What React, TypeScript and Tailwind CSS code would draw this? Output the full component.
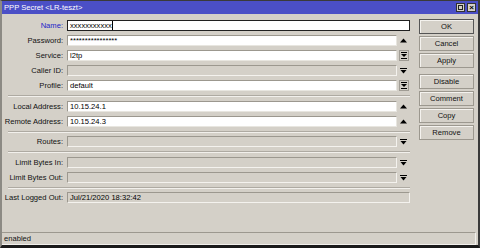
import React from 'react'

const font = { fontFamily: '"Liberation Sans", Arial, sans-serif' }

function UpArrow() {
  return (
    <svg width="7" height="5" viewBox="0 0 7 5" className="block">
      <path d="M0 4.5 L3.5 0.5 L7 4.5 Z" fill="#000" />
    </svg>
  )
}

function DownArrow() {
  return (
    <svg width="7" height="6" viewBox="0 0 7 6" className="block">
      <rect x="0" y="0" width="7" height="1" fill="#000" />
      <path d="M0.5 2 L6.5 2 L3.5 5.5 Z" fill="#000" />
    </svg>
  )
}

function DropBox() {
  return (
    <div className="w-[10px] h-[11px] border border-[#a09c94] bg-[#d4d0c8] flex items-center justify-center">
      <svg width="6" height="7" viewBox="0 0 6 7" className="block">
        <rect x="0" y="0" width="6" height="1" fill="#000" />
        <path d="M0 2 L6 2 L3 5 Z" fill="#000" />
        <rect x="0" y="6" width="6" height="1" fill="#000" />
      </svg>
    </div>
  )
}

type Trail = 'none' | 'up' | 'down' | 'box'

function Row({ label, value, disabled, trail = 'none', focused, labelClass }: {
  label: string
  value?: string
  disabled?: boolean
  trail?: Trail
  focused?: boolean
  labelClass?: string
}) {
  const box = focused
    ? 'border border-[#202020] bg-white'
    : disabled
      ? 'border border-t-[#9c988f] border-l-[#9c988f] border-b-[#f4f2ee] border-r-[#f4f2ee] bg-[#d4d0c8]'
      : 'border border-t-[#9c988f] border-l-[#9c988f] border-b-[#e8e6e0] border-r-[#e8e6e0] bg-white'
  return (
    <div className="flex items-center h-[11px]">
      <div className={`w-[61px] text-right text-[7.6px] leading-none whitespace-nowrap ${labelClass ?? 'text-[#111]'}`}>{label}</div>
      <div className={`ml-[4px] flex-1 h-[11px] flex items-center pl-[2px] text-[7.6px] leading-none text-black ${box}`}>
        {value}
        {focused && <span className="inline-block w-px h-[9px] bg-black" />}
      </div>
      {trail !== 'none' && (
        <div className="w-[13px] h-[11px] flex items-center justify-center">
          {trail === 'up' && <UpArrow />}
          {trail === 'down' && <DownArrow />}
          {trail === 'box' && <DropBox />}
        </div>
      )}
    </div>
  )
}

function Sep({ thin }: { thin?: boolean }) {
  return (
    <div className={`ml-[6px] ${thin ? 'my-[-0.5px]' : ''}`}>
      <div className="h-px bg-[#aeaaa2]" />
      <div className="h-px bg-[#f2f0ec]" />
    </div>
  )
}

function Btn({ label, def }: { label: string; def?: boolean }) {
  return (
    <div
      className={`h-[15px] flex items-center justify-center text-[7.6px] text-[#111] bg-[#d4d0c8] ${def ? 'border border-[#555] shadow-[inset_1px_1px_0_#f4f2ee]' : 'border border-[#9c988f] shadow-[inset_1px_1px_0_#f4f2ee]'}`}
    >
      {label}
    </div>
  )
}

export default function App() {
  return (
    <div className="w-[480px] h-[248px] bg-[#d4d0c8] flex flex-col border-t border-t-[#3a3a3a] border-l-2 border-l-[#8c8a84] border-r-2 border-r-[#3a3a3a] border-b-[3px] border-b-[#1a1a1a] overflow-hidden" style={font}>
      <div className="h-[13px] bg-[#4b4fc6] flex items-center pl-[2px] pr-[2px]">
        <span className="text-white text-[7.6px] leading-none">PPP Secret &lt;LR-teszt&gt;</span>
        <div className="ml-auto flex gap-[2px]">
          <div className="w-[9px] h-[9px] bg-[#d4d0c8] border border-[#333] flex items-center justify-center">
            <div className="w-[5px] h-[5px] border border-[#222]" />
          </div>
          <div className="w-[9px] h-[9px] bg-[#d4d0c8] border border-[#333] flex items-center justify-center text-[8px] leading-none font-bold text-black">×</div>
        </div>
      </div>
      <div className="flex-1 flex">
        <div className="w-[408px] pt-[6px] flex flex-col gap-[4px]">
          <Row label="Name:" value="xxxxxxxxxxx" focused labelClass="text-[#2323c8]" />
          <Row label="Password:" value="****************" trail="up" />
          <Row label="Service:" value="l2tp" trail="box" />
          <Row label="Caller ID:" disabled trail="down" />
          <Row label="Profile:" value="default" trail="box" />
          <Sep />
          <Row label="Local Address:" value="10.15.24.1" trail="up" />
          <Row label="Remote Address:" value="10.15.24.3" trail="up" />
          <Sep thin />
          <Row label="Routes:" disabled trail="down" />
          <Sep />
          <Row label="Limit Bytes In:" disabled trail="down" />
          <Row label="Limit Bytes Out:" disabled trail="down" />
          <Sep thin />
          <Row label="Last Logged Out:" value="Jul/21/2020 18:32:42" disabled />
        </div>
        <div className="ml-[9px] w-[55px] pt-[5px] flex flex-col gap-[2px]">
          <Btn label="OK" def />
          <Btn label="Cancel" />
          <Btn label="Apply" />
          <div className="h-[2px]" />
          <Btn label="Disable" />
          <Btn label="Comment" />
          <Btn label="Copy" />
          <Btn label="Remove" />
        </div>
      </div>
      <div className="h-[13px] mr-[2px] border-t border-t-[#9c988f] border-b border-b-[#f2f0ec] border-r border-r-[#f2f0ec] flex items-center pl-[2px] text-[7.6px] leading-none text-[#111]">
        enabled
      </div>
    </div>
  )
}
